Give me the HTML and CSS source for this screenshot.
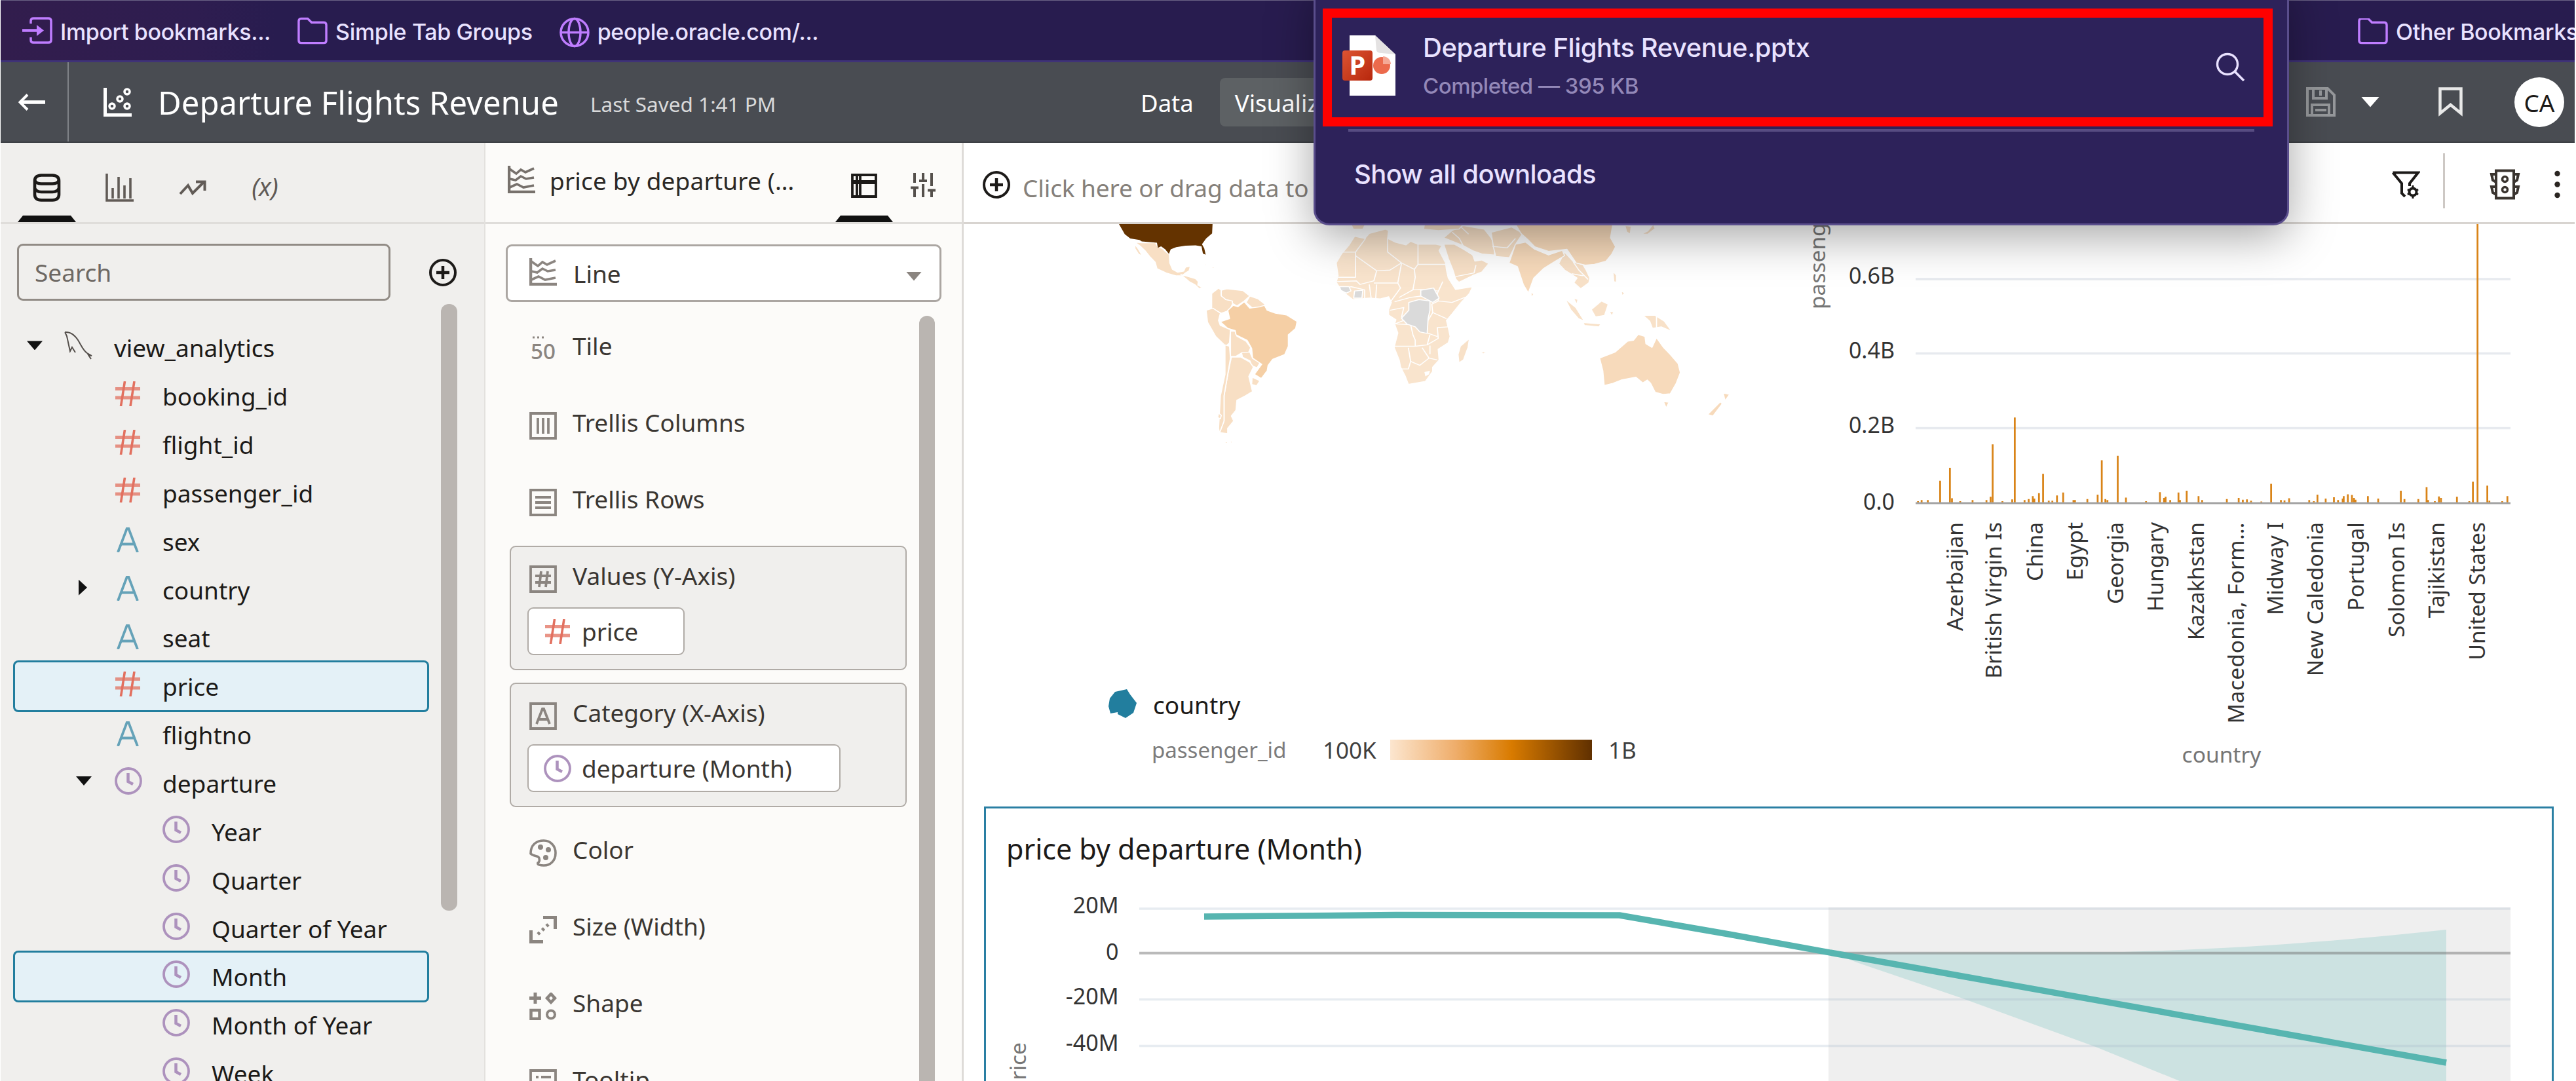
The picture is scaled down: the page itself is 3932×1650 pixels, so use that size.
FILE: index.html
```html
<!DOCTYPE html>
<html lang="en">
<head>
<meta charset="utf-8">
<title>Departure Flights Revenue</title>
<link rel="stylesheet" href="styles.css">
</head>
<body>
<svg class="defs" aria-hidden="true">
  <symbol id="hash" viewBox="0 0 38 38"><path d="M0 11.500H38M0 25H38" stroke-width="5" opacity=".75"/><path d="M14.500 0L8.500 38M29 0L23 38" stroke-width="3.600"/></symbol>
  <symbol id="alpha" viewBox="0 0 38 38"><path d="M4 38L18 1H20L34 38M9.500 25.500H28.500" stroke-width="3.800"/></symbol>
  <symbol id="clock" viewBox="0 0 42 42"><circle cx="21" cy="21" r="19" stroke-width="3.800"/><path d="M20.500 9V22L28 26" stroke-width="4.500"/></symbol>
  <symbol id="plus" viewBox="0 0 42 42"><circle cx="21" cy="21" r="19" stroke-width="4"/><path d="M21 11V31M11 21H31" stroke-width="4.500"/></symbol>
  <symbol id="folder" viewBox="0 0 47 42"><path d="M2 36V6Q2 2 6 2H16L22 8H41Q45 8 45 12V36Q45 40 41 40H6Q2 40 2 36Z" stroke-width="3.500"/></symbol>
  <symbol id="lines" viewBox="0 0 42 42"><path d="M2 0V40H42" stroke-width="4.500"/><path d="M3 5L13 12L20 6L27 10L40 4M3 20L12 22L20 16L28 20L40 18M3 33L14 28L24 33L40 30" stroke-width="3.600"/></symbol>
</svg>
<div class="app">
  <nav class="bookmarks">
    <a><svg viewBox="0 0 46 42"><path d="M13 10V6Q13 2 17 2H40Q44 2 44 6V35Q44 39 40 39H17Q13 39 13 35V31" stroke-width="3.500"/><path d="M0 20.500H26" stroke-width="4.500"/><path d="M22 12L33 20.500L22 29Z" fill="#bf7dff" stroke="none"/></svg>Import bookmarks...</a>
    <a><svg><use href="#folder"/></svg>Simple Tab Groups</a>
    <a><svg class="globe" viewBox="0 0 46 47"><circle cx="23" cy="23.500" r="21" stroke-width="3.500"/><ellipse cx="23" cy="23.500" rx="9" ry="21" stroke-width="3.500"/><path d="M2 23.500H44" stroke-width="3.500"/></svg>people.oracle.com/...</a>
    <a class="other"><svg><use href="#folder"/></svg>Other Bookmarks</a>
  </nav>

  <header class="header">
    <div class="back"><svg width="42" height="26" viewBox="0 0 42 26"><path d="M2 13H41" stroke-width="5.500"/><path d="M14 1.500L2.500 13L14 24.500" stroke-width="4"/></svg></div>
    <svg class="scatter" width="43" height="44" viewBox="0 0 43 44"><path d="M2.500 0V41.500H43" stroke-width="5"/><g stroke-width="3.500"><circle cx="13" cy="28" r="4"/><circle cx="25" cy="17" r="4"/><circle cx="36" cy="6" r="4"/><circle cx="36" cy="28" r="4"/></g></svg>
    <h1>Departure Flights Revenue</h1>
    <span class="saved">Last Saved 1:41 PM</span>
    <div class="modes"><span>Data</span><span class="on">Visualize</span></div>
    <div class="actions">
      <svg class="save" width="45" height="45" viewBox="0 0 45 45"><path d="M2 2H33L43 12V43H2ZM11 2V17H31V2M22 5V13M9 43V27H35V43M14 35H31" stroke-width="4"/></svg>
      <i class="caret white"></i>
      <svg class="mark" width="37" height="45" viewBox="0 0 37 45"><path d="M2.500 2.500H34.500V40L18.500 27L2.500 40Z" stroke-width="4.500"/></svg>
      <span class="avatar">CA</span>
    </div>
  </header>

  <main class="body">
    <aside class="data">
      <div class="tabs">
        <span class="tab active"><svg width="43" height="43" viewBox="0 0 43 43"><path d="M3 11Q3 3 13 2.500H30Q40 3 40 11V32Q40 40 30 40.500H13Q3 40 3 32ZM3 10Q5 15.500 13 15.500H30Q38 15.500 40 10M3 22Q5 28 13 28H30Q38 28 40 22" stroke-width="4.600"/></svg></span>
        <span class="tab"><svg width="43" height="43" viewBox="0 0 43 43"><path d="M2 0V41H43M11 22V38M20 5V38M29 18V38M38 7V38" stroke-width="3.600"/></svg></span>
        <span class="tab"><svg width="42" height="24" viewBox="0 0 42 24"><path d="M2 21L14 8L21 20L38 3" stroke-width="4"/><path d="M26 2.500H39.500V16" stroke-width="4"/></svg></span>
        <span class="tab fx">(x)</span>
      </div>
      <div class="find"><div class="search">Search</div><svg><use href="#plus"/></svg></div>
      <div class="tree">
        <ul>
          <li class="root"><i class="caret down"></i><svg class="dolphin" viewBox="0 0 46 44"><path d="M2 2C12 1 18 8 22 14C28 24 30 30 36 34L43 38L38 37L42 43M2 2L5 8L8 22L10 31L13 25L18 33" stroke-width="2"/></svg><span>view_analytics</span></li>
          <li class="num"><svg><use href="#hash"/></svg><span>booking_id</span></li>
          <li class="num"><svg><use href="#hash"/></svg><span>flight_id</span></li>
          <li class="num"><svg><use href="#hash"/></svg><span>passenger_id</span></li>
          <li class="txt"><svg><use href="#alpha"/></svg><span>sex</span></li>
          <li class="txt"><i class="caret right"></i><svg><use href="#alpha"/></svg><span>country</span></li>
          <li class="txt"><svg><use href="#alpha"/></svg><span>seat</span></li>
          <li class="num sel"><svg><use href="#hash"/></svg><span>price</span></li>
          <li class="txt"><svg><use href="#alpha"/></svg><span>flightno</span></li>
          <li class="time"><i class="caret down"></i><svg><use href="#clock"/></svg><span>departure</span></li>
          <li class="time sub"><svg><use href="#clock"/></svg><span>Year</span></li>
          <li class="time sub"><svg><use href="#clock"/></svg><span>Quarter</span></li>
          <li class="time sub"><svg><use href="#clock"/></svg><span>Quarter of Year</span></li>
          <li class="time sub sel"><svg><use href="#clock"/></svg><span>Month</span></li>
          <li class="time sub"><svg><use href="#clock"/></svg><span>Month of Year</span></li>
          <li class="time sub"><svg><use href="#clock"/></svg><span>Week</span></li>
        </ul>
        <div class="bar"></div>
      </div>
    </aside>

    <aside class="grammar">
      <div class="gtop">
        <svg class="ic"><use href="#lines"/></svg>
        <span class="name">price by departure (…</span>
        <span class="gtab active"><svg width="40" height="37" viewBox="0 0 40 37"><path d="M2 2H38V35H2ZM9 2V35M14 2V35" stroke-width="3.800"/><path d="M2 13H38" stroke-width="6"/></svg></span>
        <svg class="sliders" width="38" height="37" viewBox="0 0 38 37"><path d="M6 0V15M6 24V37M19 0V10M19 17V37M32 0V20M32 28V37M0 22.500H12M13 12H25M26 26.500H38" stroke-width="4"/></svg>
      </div>
      <div class="select"><svg class="ic"><use href="#lines"/></svg><span>Line</span><i class="caret"></i></div>
      <div class="glist">
        <div class="slots">
          <div class="slot"><div class="lab"><svg class="ic" viewBox="0 0 42 42"><path d="M5 3H8M12 3H15M19 3H22" stroke-width="3"/><text x="2" y="36" textLength="38" lengthAdjust="spacingAndGlyphs" class="fifty">50</text></svg>Tile</div></div>
          <div class="slot"><div class="lab"><svg class="ic" viewBox="0 0 42 42"><path d="M2 2H40V40H2ZM13 9V33M21 9V33M29 9V33" stroke-width="3.800"/></svg>Trellis Columns</div></div>
          <div class="slot"><div class="lab"><svg class="ic" viewBox="0 0 42 42"><path d="M2 2H40V40H2ZM9 13H33M9 21H33M9 29H33" stroke-width="3.800"/></svg>Trellis Rows</div></div>
          <div class="slot full">
            <div class="lab"><svg class="ic" viewBox="0 0 42 42"><path d="M2 2H40V40H2ZM9 16H33M9 26H33M18 9L15 33M28 9L25 33" stroke-width="3.800"/></svg>Values (Y-Axis)</div>
            <div class="pill num price"><svg><use href="#hash"/></svg>price</div>
          </div>
          <div class="slot full">
            <div class="lab"><svg class="ic" viewBox="0 0 42 42"><path d="M2 2H40V40H2ZM11 33L20 10H22L31 33M14 26H28" stroke-width="3.800"/></svg>Category (X-Axis)</div>
            <div class="pill time month"><svg><use href="#clock"/></svg>departure (Month)</div>
          </div>
          <div class="slot"><div class="lab"><svg class="ic" viewBox="0 0 42 42"><path d="M2 22C2 8 11 2 22 2C33 2 40 11 40 21C40 33 32 40 22 40C17 40 12 39 13 36C15 35 16 33 15 29C14 24 7 27 2 22Z" stroke-width="3.600"/><g fill="#8b8580" stroke="none"><circle cx="17" cy="12" r="4"/><circle cx="29" cy="16" r="4"/><circle cx="25" cy="28" r="4"/></g></svg>Color</div></div>
          <div class="slot"><div class="lab"><svg class="ic" viewBox="0 0 42 42"><path d="M21 2.500H39.500V20M2.500 22V39.500H21" stroke-width="5"/><path d="M13 28L29 13" stroke-width="5" stroke-dasharray="4 5"/></svg>Size (Width)</div></div>
          <div class="slot"><div class="lab"><svg class="ic" viewBox="0 0 42 42"><path d="M9 0V17M0 8.500H18" stroke-width="5"/><path d="M33 2L39 8.500L33 15L27 8.500ZM2.500 27H15.500V40H2.500Z" stroke-width="4.500"/><circle cx="33" cy="33.500" r="6" stroke-width="4"/></svg>Shape</div></div>
          <div class="slot"><div class="lab"><svg class="ic" viewBox="0 0 42 42"><path d="M2 2H40V32H2ZM10 12H14M18 12H33M10 20H14M18 20H33" stroke-width="3.800"/></svg>Tooltip</div></div>
        </div>
        <div class="bar"></div>
      </div>
    </aside>

    <section class="canvas">
      <div class="filters">
        <svg class="add"><use href="#plus"/></svg>
        <span>Click here or drag data to</span>
        <div class="tools">
          <svg width="44" height="42" viewBox="0 0 44 42"><path d="M2.500 2.500H41L28 19V23M2.500 2.500L16 19V34L21 39" stroke-width="4"/><circle cx="33" cy="32" r="5.500" stroke-width="4"/><path d="M33 22V26M33 38V42M25 28L28 30M38 34L41 36M41 28L38 30M28 34L25 36" stroke-width="3"/></svg>
          <i class="rule"></i>
          <svg class="traffic" width="47" height="47" viewBox="0 0 47 47"><path d="M10 2.500H37V44.500H10ZM10 8H3L5 17L10 20M37 8H44L42 17L37 20M10 27H3L5 36L10 39M37 27H44L42 36L37 39" stroke-width="4"/><circle cx="23.500" cy="15.500" r="4" stroke-width="3.500"/><circle cx="23.500" cy="31.500" r="4" stroke-width="3.500"/></svg>
          <svg class="dots" width="9" height="44" viewBox="0 0 9 44"><g fill="#2b2622" stroke="none"><circle cx="4.500" cy="5" r="4.200"/><circle cx="4.500" cy="21.500" r="4.200"/><circle cx="4.500" cy="38" r="4.200"/></g></svg>
        </div>
      </div>
      <div class="top">
        <div class="map">
          <svg width="1100" height="698" viewBox="0 21.900 1568 1272.600" preserveAspectRatio="none">
            <g stroke="#fff" stroke-width="2.500" stroke-linejoin="round">
              <g fill="#f8dfc4">
                <path d="M190 72L205 74L235 74L240 85L250 90L258 100L265 106L266 130L272 148L283 156L296 153L300 142L311 139L308 152L300 158L292 166L280 166L258 158L238 146L234 128L222 112L212 96L202 84Z"/>
                <path d="M190 78L198 92L206 110L198 106L190 90Z"/>
                <path d="M290 162L306 168L322 174L328 182L327 192L336 198L330 202L320 190L308 182Z"/>
                <path d="M338 132L346 134L344 138ZM356 140L364 142L360 146Z"/>
                <path d="M357 215L372 200L378 206L378 220L388 232L410 236L402 245L396 262L378 270L357 256Z"/>
                <path d="M378 206L390 202L425 207L440 222L428 236L412 250L402 242L402 236L388 232L378 222Z"/>
                <path d="M440 222L458 230L474 246L466 254L446 256L432 240Z"/>
                <path d="M345 262L360 256L376 270L372 290L376 304L398 316L396 352L388 362L366 335L348 295Z"/>
                <path d="M398 320L408 320L412 334L432 348L442 366L438 378L420 382L410 390L398 390Z"/>
                <path d="M422 380L440 378L446 395L462 408L456 422L444 416L440 402L424 392Z"/>
                <path d="M400 392L420 392L440 406L448 420L438 446L446 488L430 500L412 512L410 540L400 556L405 570L392 590L392 605L374 602L384 570L384 500L392 440Z"/>
                <path d="M386 358L396 362L398 395L392 440L384 500L384 570L374 604L372 590L376 500L386 440Z"/>
                <path d="M445 448L462 458L455 472L444 468ZM372 548L378 554L376 564L370 560ZM384 628L392 628L390 633ZM396 624L402 628L400 634Z"/>
              </g>
              <path fill="#f5cfa5" d="M376 294L396 285L392 262L404 248L414 252L428 238L440 256L462 252L472 248L478 262L496 270L520 275L543 293L540 312L524 330L524 362L516 385L490 398L480 415L478 430L465 452L450 440L466 412L446 395L444 368L434 345L410 330L408 318L392 312Z"/>
              <path fill="#f9e4cd" d="M690 62L700 48L735 36L742 40L740 62L756 72L780 80L790 70L806 78L845 78L858 82L852 96L866 130L868 150L872 172L888 204L925 196L918 215L900 240L880 272L868 290L872 310L876 335L872 352L850 370L852 400L838 420L838 432L822 460L785 468L778 445L768 420L765 400L754 365L762 325L755 300L758 288L742 275L742 260L748 240L742 224L724 230L700 228L680 230L664 232L640 208L628 184L632 165L628 130L640 104L655 82L668 56Z"/>
              <path fill="none" d="M692 62L670 100H640M670 100V170H632M670 110L716 152L745 150L770 130L740 100V62M716 152L710 180L680 190L672 180L628 182M710 186L762 186L768 200L745 240M762 186L770 132M770 130L798 148L800 170L795 205L765 226M806 78V134H866M806 134L798 148M795 205L812 204L850 208M860 182L848 215L850 236L880 240L910 225M850 236L836 245L838 268L868 285M755 238L790 226L815 222M745 262L775 254L770 282M755 300L775 290M760 300L790 302L795 330L800 345V362H752M800 362L826 358L850 340L848 310L872 308M838 268L828 290M826 325L848 335M785 366L790 404L785 425L768 425M790 404L810 415L830 395L815 366M830 395L848 400M832 360V384M640 208L660 196L690 205V228M700 190L704 228M716 190L714 228M832 330L826 358"/>
              <path fill="#fff" stroke="none" d="M820 434L832 430L830 440L822 446Z"/>
              <g fill="#dadada">
                <path d="M635 196L656 196L660 208L650 214L638 206ZM668 208L686 206L684 228L666 228Z"/>
                <path d="M812 206L840 200L852 228L838 240L812 222Z"/>
                <path d="M786 240L808 232L832 236L832 262L828 285L826 326L810 322L800 308L782 300L770 284L786 262Z"/>
              </g>
              <g fill="#f8e1c8">
                <path d="M918 340L915 365L905 400L895 408L893 385L898 362ZM943 378L956 376L948 384Z"/>
                <path d="M862 78L885 78L905 92L925 108L930 125L945 122L960 132L945 155L925 165L895 184L888 175L882 150L872 118Z"/>
                <path d="M888 168L928 158L932 136"/>
                <path d="M862 60L880 40L905 26L950 36L965 60L975 85L972 108L945 105L925 96L905 82L885 72Z"/>
                <path fill="none" d="M880 44L896 62L905 84M898 28L916 50"/>
                <path d="M965 45L1010 30L1034 48L1020 75L1005 115L975 112L970 85Z"/>
                <path fill="none" d="M968 84L1000 88L1018 62"/>
                <path d="M820 22L905 22L895 36L850 40L818 36ZM660 22L692 22L686 36L665 36Z"/>
                <path d="M1125 100L1145 128L1165 135L1172 150L1180 172L1178 185L1160 202L1145 185L1152 172L1140 162L1125 150L1112 132Z"/>
                <path fill="none" d="M1144 128L1156 150L1176 176M1140 160L1166 166"/>
                <path d="M1126 230L1150 255L1168 292L1155 285L1138 260ZM1165 296L1204 300L1200 308L1168 304ZM1183 260L1205 236L1220 245L1212 276L1192 280ZM1144 228L1154 232L1152 246ZM1230 152L1238 165L1238 184L1232 182ZM1222 265L1232 266L1228 278ZM1248 208L1256 214L1250 222ZM1052 208L1058 218L1052 226Z"/>
                <path d="M1296 276L1322 276L1342 292L1358 320L1335 308L1316 312L1310 292ZM1256 26L1270 28L1268 50L1260 44ZM1292 50L1305 42L1318 22L1322 34L1306 50Z"/>
                <path fill="none" d="M1325 276V312"/>
              </g>
              <g fill="#f7dabb">
                <path d="M1018 78L1040 72L1060 92L1090 108L1120 95L1125 110L1105 125L1080 145L1058 172L1046 214L1035 190L1022 140L1004 130Z"/>
                <path d="M1018 22L1230 22L1225 60L1236 85L1228 105L1215 125L1190 134L1170 136L1150 130L1130 92L1090 98L1060 85L1045 65L1030 48Z"/>
                <path d="M1201 395L1235 378L1262 348L1275 345L1285 329L1300 335L1302 355L1315 365L1325 338L1340 365L1355 385L1372 410L1377 435L1368 465L1355 494L1340 496L1322 490L1312 465L1305 456L1295 464L1280 448L1250 455L1230 465L1211 471L1208 430Z"/>
                <path d="M1340 516L1352 518L1346 534ZM1470 492L1484 496L1474 514ZM1464 516L1468 522L1448 556L1436 552Z"/>
              </g>
              <path fill="#643300" stroke="none" d="M155 21L359 21L358 48L345 62L336 78L341 90L344 107L338 104L335 84L322 81L300 82L280 86L268 92L264 105L256 92L247 84L240 88L238 74L205 70L200 66L180 62L168 50Z"/>
            </g>
          </svg>
          <div class="lg1"><svg width="43" height="44" viewBox="0 0 43 44"><path fill="#227e9e" stroke="none" d="M2 14L10 4L28 0L33 8L43 21L38 36L26 44L14 38L14 35L3 37L0 26Z"/></svg><span>country</span></div>
          <div class="lg2"><span class="mut">passenger_id</span><span class="lo">100K</span><i></i><span>1B</span></div>
        </div>
        <svg class="bars" width="1230" height="889" viewBox="2700 342 1230 889">
          <path d="M2925 426H3833M2925 539.500H3833M2925 653.500H3833" stroke="#e7eaef" stroke-width="3.500"/>
          <path transform="translate(2700 330) scale(.78571 .54845)" stroke="#d98418" stroke-width="3.500" d="M291 798V793M298 798V790M310 798V790M334 798V736M353 798V700M357 798V785M373 798V793M397 798V790M424 798V790M432 798V781M436 798V635M455 798V793M474 798V788M479 798V560M498 798V790M506 798V787M514 798V779M517 798V786M526 798V771M534 798V717M545 798V792M552 798V792M561 798V777M573 798V769M593 798V790M596 798V790M620 798V787M640 798V775M648 798V679M655 798V787M659 798V790M679 798V667M695 798V783M734 798V793M761 798V768M769 798V784M772 798V781M781 798V790M797 798V769M800 798V790M813 798V764M836 798V779M843 798V790M891 798V787M914 798V784M922 798V789M930 798V788M938 798V792M958 798V794M977 798V745M996 798V790M1003 798V791M1012 798V785M1051 798V790M1060 798V793M1067 798V775M1083 798V786M1099 798V782M1107 798V790M1116 798V786M1118 798V779M1126 798V774M1134 798V776M1138 798V784M1141 798V789M1165 798V779M1185 798V786M1229 798V764M1236 798V787M1263 798V787M1279 798V754M1282 798V790M1295 798V793M1303 798V780M1307 798V784M1338 798V781M1362 798V793M1369 798V739M1378 798V18M1397 798V750M1401 798V792M1426 798V793M1436 798V779"/>
          <path d="M2925 768H3833" stroke="#a3a3a3" stroke-width="3"/>
          <g class="ylab"><text x="2893" y="433">0.6B</text><text x="2893" y="547">0.4B</text><text x="2893" y="660.500">0.2B</text><text x="2893" y="778">0.0</text></g>
          <text class="axis" transform="translate(2787 472) rotate(-90)">passenger_id</text>
          <g class="xlab">
            <text transform="translate(2997 797) rotate(-90)">Azerbaijan</text>
            <text transform="translate(3056 797) rotate(-90)">British Virgin Is</text>
            <text transform="translate(3119 797) rotate(-90)">China</text>
            <text transform="translate(3180 797) rotate(-90)">Egypt</text>
            <text transform="translate(3242 797) rotate(-90)">Georgia</text>
            <text transform="translate(3303 797) rotate(-90)">Hungary</text>
            <text transform="translate(3365 797) rotate(-90)">Kazakhstan</text>
            <text class="long" transform="translate(3426 797) rotate(-90)">Macedonia, Form…</text>
            <text transform="translate(3486 797) rotate(-90)">Midway I</text>
            <text transform="translate(3547 797) rotate(-90)">New Caledonia</text>
            <text transform="translate(3609 797) rotate(-90)">Portugal</text>
            <text transform="translate(3671 797) rotate(-90)">Solomon Is</text>
            <text transform="translate(3732 797) rotate(-90)">Tajikistan</text>
            <text transform="translate(3794 797) rotate(-90)">United States</text>
          </g>
          <text class="axis mid" x="3392" y="1164">country</text>
        </svg>
      </div>
      <div class="card">
        <h2>price by departure (Month)</h2>
        <svg width="2389" height="290" viewBox="1506 1360 2389 290">
          <path d="M2792 1385H3833V1650H2792Z" fill="#efefef" stroke="none"/>
          <path d="M2796 1454L3241 1453C3400 1449 3560 1438 3735 1419V1650H3328L3200 1598L2994 1523L2838 1470Z" fill="#cce2e1" stroke="none"/>
          <path d="M1740 1387H3833M1740 1525.500H3833M1740 1596.500H3833" stroke="rgba(160,178,200,.25)" stroke-width="3.500"/>
          <path d="M1740 1454.800H3833" stroke="rgba(110,110,110,.48)" stroke-width="4"/>
          <path d="M1839 1399L2132 1396.600L2473 1397L2640 1426L2800 1455L3735 1622" stroke="#57b5b0" stroke-width="9.500" stroke-linejoin="round"/>
          <g class="ylab"><text x="1708.500" y="1394">20M</text><text x="1708.500" y="1465">0</text><text x="1708.500" y="1533">-20M</text><text x="1708.500" y="1604">-40M</text></g>
          <text class="axis end" transform="translate(1567 1591) rotate(-90)">price</text>
        </svg>
      </div>
    </section>
  </main>

  <div class="popup">
    <div class="file">
      <svg class="ppt" width="82" height="94" viewBox="0 0 82 94">
        <defs><linearGradient id="red" x2="1" y2="1"><stop stop-color="#dd5433"/><stop offset="1" stop-color="#b7270c"/></linearGradient></defs>
        <path d="M11 1H50L81 30V93H11Z" fill="#fff"/><path d="M50 1L52 24Q53 28 60 28L81 30Z" fill="#e4e2e2"/>
        <circle cx="60" cy="47" r="13" fill="#ec6a4c"/><path d="M62 45V33A12 12 0 0 1 74 45Z" fill="#f5a996"/>
        <rect x="0" y="24" width="46" height="46" rx="4" fill="url(#red)"/>
        <text x="23" y="61" class="pp">P</text>
      </svg>
      <div class="meta"><strong>Departure Flights Revenue.pptx</strong><small>Completed — 395 KB</small></div>
      <svg class="lens" width="46" height="46" viewBox="0 0 46 46"><circle cx="18" cy="18" r="15.500" stroke-width="3.400"/><path d="M29 29L43 43" stroke-width="3.600"/></svg>
    </div>
    <hr>
    <div class="all">Show all downloads</div>
  </div>
</div>
</body>
</html>
```
FILE: styles.css
```css
* { box-sizing: border-box; }
body { margin: 0; background: #fff; overflow: hidden; }
svg { fill: none; stroke: currentColor; flex: none; display: block; }
svg text { stroke: none; }
.defs { position: absolute; width: 0; height: 0; }
.app {
  position: relative; width: 3932px; height: 1650px; overflow: hidden;
  display: flex; flex-direction: column; padding: 0 2px 0 1px;
  font-family: "Noto Sans", sans-serif; font-size: 37px; color: #1c1a18; white-space: nowrap;
}
.caret { flex: none; width: 24px; height: 14px; background: #8b8580; clip-path: polygon(0 0, 100% 0, 50% 100%); }
.bar { background: #bab5b1; border-radius: 12px; width: 24px; flex: none; }

.bookmarks {
  height: 95px; flex: none; display: flex; align-items: center; gap: 41px;
  padding: 3px 0 0 33px; border-top: 1px solid #6a6285; border-bottom: 3px solid #3f3278;
  background: linear-gradient(90deg, #321d4d 0, #2e1d50 300px, #281c4f 420px);
  color: #e9e2ff; font: 500 34px Inter, sans-serif; letter-spacing: -.36px;
}
.bookmarks a { display: flex; align-items: center; gap: 12px; }
.bookmarks svg { width: 46px; height: 42px; color: #bf7dff; margin-top: -2px; }
.bookmarks .globe { height: 47px; margin-top: 3px; }
.bookmarks .other { margin-left: auto; width: 331px; overflow: hidden; }

.header { height: 123px; flex: none; display: flex; align-items: center; background: #494c52; color: #fff; border-bottom: 2px solid #3c3f44; }
.back { width: 104px; align-self: stretch; display: flex; align-items: center; padding-left: 27px; border-right: 2px solid #808388; }
.scatter { margin-left: 53px; }
.header h1 { margin: 0 0 0 40px; font-size: 49px; font-weight: 400; width: 613px; }
.saved { margin-left: 47px; font-size: 31.500px; width: 290px; color: #d8d9da; padding-top: 6px; }
.modes { display: flex; align-items: center; margin-left: 527px; }
.modes span { height: 74px; line-height: 76px; padding: 0 23px; font-size: 36.500px; border-radius: 8px; }
.modes .on { margin-left: 17px; background: #5d6164; }
.actions { margin-left: auto; display: flex; align-items: center; padding-right: 16px; }
.save { color: #96989b; margin-right: 39px; }
.caret.white { background: #fff; width: 28px; height: 16px; margin-right: 90px; }
.mark { color: #e8e8e8; margin-right: 79px; }
.avatar { width: 76px; height: 76px; border-radius: 50%; background: #fff; color: #1c1a18; text-align: center; line-height: 77px; font-size: 37px; }

.body { flex: 1; display: flex; min-height: 0; }

.data { width: 738px; flex: none; background: #f0efed; display: flex; flex-direction: column; }
.tabs { height: 124px; flex: none; display: flex; border-bottom: 3px solid #dfddda; padding-left: 25px; gap: 20px; color: #615b56; }
.tab { width: 91px; height: 121px; position: relative; display: flex; align-items: center; justify-content: center; padding-top: 16px; }
.tab.active, .gtab.active { color: #1c1a18; }
.tab.active::after, .gtab.active::after {
  content: ""; position: absolute; left: 1px; right: 1px; bottom: 0; height: 10px; background: #111;
  clip-path: polygon(8px 0, calc(100% - 8px) 0, 100% 100%, 0 100%);
}
.fx { font: italic 38px "Noto Sans", sans-serif; padding-top: 10px; }
.find { display: flex; align-items: center; margin: 30px 0 0 25px; gap: 59px; color: #1c1a18; }
.search { width: 570px; height: 87px; border: 3px solid #918b85; border-radius: 9px; line-height: 82px; padding-left: 24px; color: #6d6863; }
.find svg { width: 42px; height: 42px; }
.tree { display: flex; margin-top: 5px; flex: 1; min-height: 0; overflow: hidden; }
.tree ul { list-style: none; margin: 0; padding: 30px 0 0 19px; width: 672px; height: 1600px; flex: none; }
.tree li { display: grid; grid-template-columns: 104px 51px 71px 1fr; align-items: center; height: 73.850px; }
.tree li.sub { grid-template-columns: 177px 51px 73px 1fr; }
.tree li.root { grid-template-columns: 21px 56px 77px 1fr; }
.tree li > span { grid-column: 4; grid-row: 1; margin-left: 2px; }
.tree li.root > span { margin-left: 0; }
.tree li > svg { grid-column: 3; grid-row: 1; width: 42px; height: 42px; margin: -7px 0 0 0; }
.tree li.num > svg, .tree li.txt > svg { width: 38px; height: 38px; margin-left: 1px; margin-top: -8px; }
.tree li.txt > svg { margin-top: -4px; }
.tree li > .caret { grid-column: 2; grid-row: 1; background: #111; margin: -7px 0 0 -8px; }
.tree li.root > .caret { margin-left: 0; }
.tree li.root > svg { width: 46px; height: 44px; }
.tree .caret.right { width: 13px; height: 24px; clip-path: polygon(0 0, 100% 50%, 0 100%); margin-left: -4px; }
.sel { background: #e4f1f7; box-shadow: inset 0 0 0 3px #227e9e; border-radius: 8px; }
.tree li.sel { height: 79px; margin: -2.600px 0; width: 635px; }
.tree .bar { height: 926px; width: 25px; }
.dolphin { color: #55504c; }
.num svg { color: #e2705f; }
.txt svg { color: #65a2b8; }
.time svg { color: #ad92bd; }

.grammar { width: 732px; flex: none; background: #fcfbf9; border-left: 2px solid #e3e1de; border-right: 3px solid #dedbd8; display: flex; flex-direction: column; color: #3a3632; }
.ic { width: 42px; height: 42px; color: #8b8580; }
.gtop { height: 124px; flex: none; border-bottom: 3px solid #dfddda; display: flex; align-items: center; padding-left: 34px; }
.gtop .ic { margin-top: -10px; color: #77716c; }
.gtop .name { margin-left: 22px; width: 436px; margin-top: -7px; color: #2b2825; letter-spacing: .15px; }
.gtab { position: relative; width: 88px; height: 121px; display: flex; align-items: center; justify-content: center; padding-top: 9px; }
.gtab.active::after { left: 0; right: 0; }
.sliders { margin: 8px 0 0 27px; color: #55504c; }
.select { margin: 31px 0 0 31px; width: 665px; height: 88px; flex: none; border: 3px solid #aba6a2; border-radius: 9px; background: #fff; display: flex; align-items: center; padding-left: 33px; }
.select .ic { margin-top: -4px; }
.select span { margin-left: 25px; flex: 1; }
.select .caret { margin: 9px 27px 0 0; }
.glist { display: flex; margin-top: 21px; padding-left: 37px; gap: 19px; height: 1168px; flex: none; overflow: hidden; }
.slots { width: 606px; flex: none; display: flex; flex-direction: column; gap: 19px; }
.slot { height: 98px; flex: none; border: 2.500px solid transparent; border-radius: 9px; padding-left: 28px; }
.slot.full { height: 190px; background: #f0efed; border-color: #b0aba6; padding-left: 25px; }
.slot.full .lab { margin-left: 3px; }
.lab { display: flex; align-items: center; gap: 24px; height: 87px; }
.lab .ic { margin-top: 10px; }
.fifty { font: 500 32px "Noto Sans", sans-serif; fill: #8b8580; }
.pill { height: 73px; margin-top: 5px; border: 2.500px solid #b0aba6; border-radius: 9px; background: #fff; display: flex; align-items: center; gap: 18px; padding-left: 25px; }
.pill svg { width: 38px; height: 38px; }
.pill.time svg { width: 42px; height: 42px; }
.pill.time { gap: 16px; padding-left: 23px; }
.price { width: 240px; }
.month { width: 478px; }
.glist .bar { height: 1300px; }

.canvas { flex: 1; display: flex; flex-direction: column; min-width: 0; }
.filters { height: 124px; flex: none; border-bottom: 3px solid #d8d4d0; display: flex; align-items: center; padding: 9px 0 0 29px; color: #85807a; }
.filters svg { color: #1c1a18; }
.filters .add { width: 42px; height: 42px; margin-top: -3px; }
.filters span { margin-left: 19px; padding-top: 6px; width: 436px; overflow: visible; letter-spacing: -.1px; }
.tools { margin-left: auto; display: flex; align-items: center; padding-right: 22px; margin-top: -3px; }
.rule { width: 3px; height: 84px; background: #cdc8c4; margin: -11px 68px 0 35px; }
.filters .traffic { color: #3a342f; margin-right: 52px; }
.top { height: 889px; flex: none; display: flex; }
.map { width: 1228px; padding-left: 128px; flex: none; }
.lg1 { display: flex; align-items: center; height: 50px; margin: 10px 0 0 93px; gap: 25px; }
.lg1 svg { margin-top: -2px; }
.lg2 { display: flex; align-items: center; height: 46px; margin: 21px 0 0 159px; color: #3f3f3f; font-size: 35px; }
.lg2 .mut { color: #7c7c7c; font-size: 33px; width: 261px; }
.lg2 .lo { width: 103px; }
.lg2 i { width: 308px; height: 31px; margin-right: 25px; background: linear-gradient(90deg, #fce6cf 0, #efae6c 32%, #d97b00 60%, #603000 100%); }
.bars, .card svg { font-size: 34px; }
.ylab, .xlab { text-anchor: end; fill: #333; }
.xlab { font-size: 33.500px; }
.xlab .long { letter-spacing: .45px; }
.axis { fill: #757575; font-size: 33.500px; }
.mid { text-anchor: middle; }
.end { text-anchor: end; }
.card { margin-left: 31px; width: 2396px; height: 440px; flex: none; border: 3.500px solid #2a7fa3; border-bottom: 0; }
.card h2 { margin: 0; height: 126px; line-height: 123px; padding-left: 31px; font-size: 43px; font-weight: 400; }

.popup {
  position: absolute; left: 2005px; top: -30px; width: 1489px; height: 374px; border-radius: 24px;
  background: #2d225a; border: 3px solid #5a4e8c; color: #e9e2ff; padding-top: 40px;
  font: 500 40px Inter, sans-serif; box-shadow: 0 16px 70px rgba(0, 0, 0, .36);
}
.file { margin-left: 11px; width: 1450px; height: 180px; border: 14px solid #f00; display: flex; align-items: flex-start; padding-left: 16px; }
.ppt { margin-top: 26px; stroke: none; }
.pp { font: 700 40px "Noto Sans", sans-serif; fill: #fff; text-anchor: middle; }
.meta { margin: 20px 0 0 41px; width: 1210px; display: flex; flex-direction: column; }
.meta strong { font-weight: 500; line-height: 52px; font-size: 40px; letter-spacing: -.45px; }
.meta small { font-size: 33px; line-height: 46px; margin-top: 9px; color: #9388b8; letter-spacing: -.5px; }
.lens { margin-top: 53px; }
.popup hr { border: 0; height: 4px; background: #574c82; margin: 4px 50px 0; }
.all { margin: 40px 0 0 59px; line-height: 50px; letter-spacing: -.6px; }
```
